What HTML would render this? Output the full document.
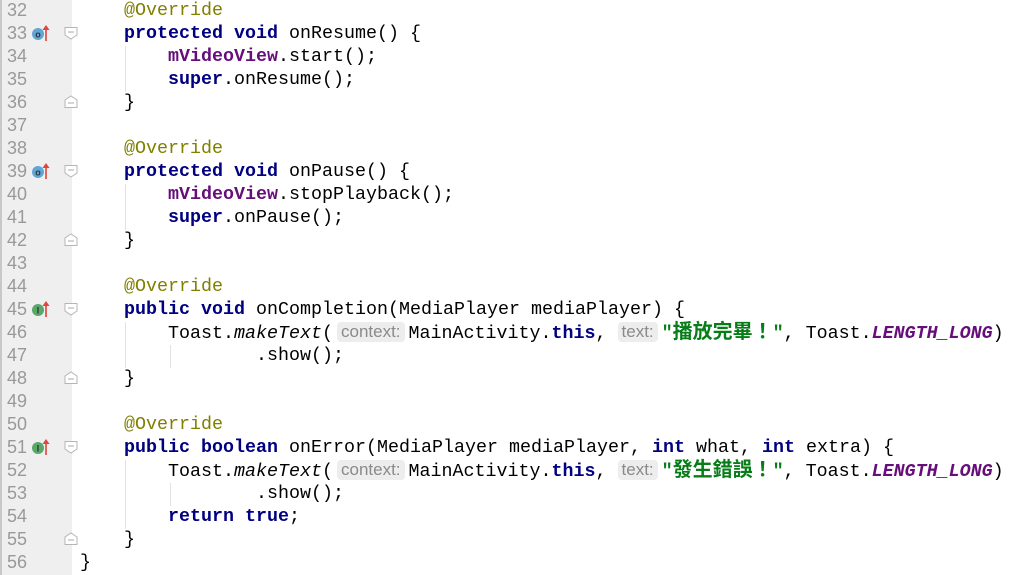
<!DOCTYPE html>
<html><head><meta charset="utf-8"><style>
body{margin:0;width:1015px;height:575px;overflow:hidden;background:#fff;position:relative;font-family:"Liberation Mono",monospace;}
#gut{position:absolute;left:0;top:0;width:72px;height:575px;background:#efefef;border-left:2px solid #c8c8c8;box-sizing:border-box;}
.ln{position:absolute;left:7px;width:40px;font-family:"Liberation Sans","DejaVu Sans",sans-serif;font-size:18px;color:#999;line-height:23px;}
.l{position:absolute;left:80px;font-size:18.33px;line-height:23px;white-space:pre;color:#000;}
.k{color:#000080;font-weight:bold}
.f{color:#660e7a;font-weight:bold}
.a{color:#808000}
.s{color:#067d17;font-weight:bold}
.c{font-family:"Liberation Sans","Noto Sans CJK TC",sans-serif;font-size:20px}
.i{font-style:italic}
.h{display:inline-block;background:#ededed;color:#8a8a8a;border-radius:4px;font-family:"Liberation Sans","DejaVu Sans",sans-serif;font-size:17px;line-height:20px;padding:0 4px;vertical-align:1px;margin-right:4px;}
.g{position:absolute;width:1px;background:#e2e2e2;}
svg{position:absolute;}
</style></head><body>
<div id="gut"></div>
<div class="g" style="left:125px;top:46px;height:46px"></div>
<div class="g" style="left:125px;top:184px;height:46px"></div>
<div class="g" style="left:125px;top:322px;height:46px"></div>
<div class="g" style="left:170px;top:345px;height:23px"></div>
<div class="g" style="left:125px;top:460px;height:69px"></div>
<div class="g" style="left:170px;top:483px;height:23px"></div>
<div id="nums"></div>
<script>
var n='';for(var i=0;i<25;i++){n+='<div class="ln" style="top:'+(i*23-1)+'px">'+(32+i)+'</div>';}
document.getElementById('nums').innerHTML=n;
</script>
<div class="l" style="top:-1px">    <span class="a">@Override</span></div>
<div class="l" style="top:22px">    <span class="k">protected void</span> onResume() {</div>
<div class="l" style="top:45px">        <span class="f">mVideoView</span>.start();</div>
<div class="l" style="top:68px">        <span class="k">super</span>.onResume();</div>
<div class="l" style="top:91px">    }</div>
<div class="l" style="top:137px">    <span class="a">@Override</span></div>
<div class="l" style="top:160px">    <span class="k">protected void</span> onPause() {</div>
<div class="l" style="top:183px">        <span class="f">mVideoView</span>.stopPlayback();</div>
<div class="l" style="top:206px">        <span class="k">super</span>.onPause();</div>
<div class="l" style="top:229px">    }</div>
<div class="l" style="top:275px">    <span class="a">@Override</span></div>
<div class="l" style="top:298px">    <span class="k">public void</span> onCompletion(MediaPlayer mediaPlayer) {</div>
<div class="l" style="top:321px">        Toast.<span class="i">makeText</span>(<span class="h" style="margin-left:4px">context:</span>MainActivity.<span class="k">this</span>, <span class="h">text:</span><span class="s">"<span class="c">播放完畢！</span>"</span>, Toast.<span class="f i">LENGTH_LONG</span>)</div>
<div class="l" style="top:344px">                .show();</div>
<div class="l" style="top:367px">    }</div>
<div class="l" style="top:413px">    <span class="a">@Override</span></div>
<div class="l" style="top:436px">    <span class="k">public boolean</span> onError(MediaPlayer mediaPlayer, <span class="k">int</span> what, <span class="k">int</span> extra) {</div>
<div class="l" style="top:459px">        Toast.<span class="i">makeText</span>(<span class="h" style="margin-left:4px">context:</span>MainActivity.<span class="k">this</span>, <span class="h">text:</span><span class="s">"<span class="c">發生錯誤！</span>"</span>, Toast.<span class="f i">LENGTH_LONG</span>)</div>
<div class="l" style="top:482px">                .show();</div>
<div class="l" style="top:505px">        <span class="k">return true</span>;</div>
<div class="l" style="top:528px">    }</div>
<div class="l" style="top:551px">}</div>
<svg width="80" height="575" style="left:0;top:0">
<defs>
<g id="dn"><path d="M-6,-5.5 H6 V2 L0,6 L-6,2 Z" fill="#fff" stroke="#b5b5b5"/><path d="M-3,-1 H3" stroke="#aaa"/></g>
<g id="up"><path d="M-6,5.5 H6 V-2 L0,-6 L-6,-2 Z" fill="#fff" stroke="#b5b5b5"/><path d="M-3,1 H3" stroke="#aaa"/></g>
<g id="arr"><path d="M0,8 V-6" stroke="#e0443a" stroke-width="1.6"/><path d="M-3.5,-3 L0,-8 L3.5,-3 Z" fill="#e0443a"/></g>
</defs>
<use href="#dn" x="71" y="33"/><use href="#up" x="71" y="102"/>
<use href="#dn" x="71" y="171"/><use href="#up" x="71" y="240"/>
<use href="#dn" x="71" y="309"/><use href="#up" x="71" y="378"/>
<use href="#dn" x="71" y="447"/><use href="#up" x="71" y="539"/>
<circle cx="38" cy="34" r="6" fill="#5fa6d6"/><text x="38" y="37.5" font-size="9" font-family="Liberation Sans" font-weight="bold" text-anchor="middle" fill="#333">o</text>
<use href="#arr" x="46" y="33"/>
<circle cx="38" cy="172" r="6" fill="#5fa6d6"/><text x="38" y="175.5" font-size="9" font-family="Liberation Sans" font-weight="bold" text-anchor="middle" fill="#333">o</text>
<use href="#arr" x="46" y="171"/>
<circle cx="38" cy="310" r="6" fill="#59a869"/><text x="38" y="313.5" font-size="9" font-family="Liberation Sans" font-weight="bold" text-anchor="middle" fill="#333">I</text>
<use href="#arr" x="46" y="309"/>
<circle cx="38" cy="448" r="6" fill="#59a869"/><text x="38" y="451.5" font-size="9" font-family="Liberation Sans" font-weight="bold" text-anchor="middle" fill="#333">I</text>
<use href="#arr" x="46" y="447"/>
</svg>
</body></html>
